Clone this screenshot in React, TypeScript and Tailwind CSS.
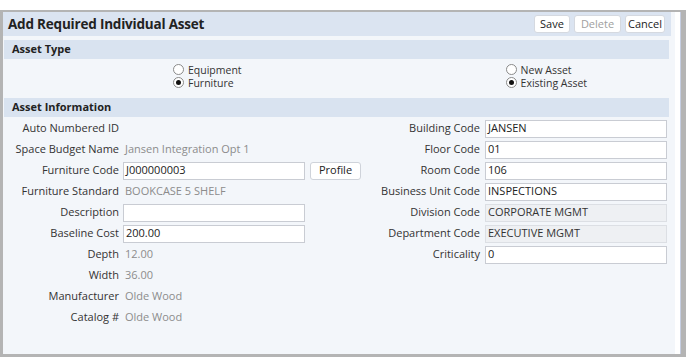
import React from "react";

const font = { fontFamily: '"Open Sans", "Noto Sans", Arial, sans-serif' };

function Radio({ checked, label }: { checked?: boolean; label: string }) {
  return (
    <div className="flex items-center h-[13px]">
      <span className="shrink-0 w-[11px] h-[11px] rounded-full border border-[#8a8a8a] bg-white flex items-center justify-center">
        {checked && <span className="w-[5px] h-[5px] rounded-full bg-[#111]" />}
      </span>
      <span className="ml-[4px] text-[10.5px] leading-[12px] text-[#333] whitespace-nowrap">{label}</span>
    </div>
  );
}

function Btn({ label, disabled, w }: { label: string; disabled?: boolean; w: string }) {
  return (
    <div
      className={
        w +
        " h-[18px] flex items-center justify-center bg-white border border-[#d5d9e0] rounded-[3px] text-[11px] " +
        (disabled ? "text-[#a0a0a0]" : "text-[#222]")
      }
    >
      {label}
    </div>
  );
}

type Kind = "text" | "input" | "ro" | "none";

function LeftRow({ label, value, kind, extra }: { label: string; value?: string; kind: Kind; extra?: React.ReactNode }) {
  return (
    <div className="h-[21px] flex items-center">
      <div className="shrink-0 w-[116px] text-right text-[11px] text-[#333] whitespace-nowrap">{label}</div>
      <div className="shrink-0 ml-[4px] flex items-center">
        {kind === "text" && <span className="pl-[2px] text-[11px] text-[#8c8c8c] whitespace-nowrap">{value}</span>}
        {kind === "input" && (
          <div className="shrink-0 w-[182px] h-[18px] bg-white border border-[#c9ccd3] pl-[2px] flex items-center text-[11px] text-[#222]">
            {value}
          </div>
        )}
        {extra}
      </div>
    </div>
  );
}

function RightRow({ label, value, kind }: { label: string; value?: string; kind: Kind }) {
  return (
    <div className="h-[21px] flex items-center">
      <div className="shrink-0 w-[137px] text-right text-[11px] text-[#333] whitespace-nowrap">{label}</div>
      <div className="shrink-0 ml-[5px]">
        {kind === "input" && (
          <div className="w-[182px] h-[18px] bg-white border border-[#c9ccd3] pl-[2px] flex items-center text-[11px] text-[#222]">
            {value}
          </div>
        )}
        {kind === "ro" && (
          <div className="w-[182px] h-[18px] bg-[#eef0f3] border border-[#dcdfe4] pl-[2px] flex items-center text-[11px] text-[#333]">
            {value}
          </div>
        )}
      </div>
    </div>
  );
}

export default function App() {
  return (
    <div className="w-[686px] h-[357px] bg-white pt-[10px]" style={font}>
      <div className="h-[347px] flex border-t-2 border-b-[3px] border-l-[3px] border-[#b4b4b4]">
        <div className="w-[672px] shrink-0 bg-[#f3f6fa] flex flex-col">
          {/* Title bar */}
          <div className="mr-[4px] h-[24px] bg-[#dbe4f1] flex items-center justify-between pl-[5px] pr-[6px]">
            <div className="text-[13.5px] font-bold text-[#222] tracking-[-0.2px]">Add Required Individual Asset</div>
            <div className="flex gap-[4px]">
              <Btn label="Save" w="w-[36px]" />
              <Btn label="Delete" disabled w="w-[47px]" />
              <Btn label="Cancel" w="w-[40px]" />
            </div>
          </div>

          {/* Asset Type */}
          <div className="mt-[4px] ml-[1px] mr-[6px] h-[19px] bg-[#d9e3f0] flex items-center pl-[8px] text-[11px] font-bold text-[#222]">
            Asset Type
          </div>
          <div className="h-[39px] pt-[4px] flex">
            <div className="ml-[170px] flex flex-col">
              <Radio label="Equipment" />
              <Radio label="Furniture" checked />
            </div>
            <div className="ml-[264px] flex flex-col">
              <Radio label="New Asset" />
              <Radio label="Existing Asset" checked />
            </div>
          </div>

          {/* Asset Information */}
          <div className="ml-[1px] mr-[6px] h-[19px] bg-[#d9e3f0] flex items-center pl-[8px] text-[11px] font-bold text-[#222]">
            Asset Information
          </div>
          <div className="flex pt-[1px]">
            <div className="w-[340px] shrink-0 flex flex-col">
              <LeftRow label="Auto Numbered ID" kind="none" />
              <LeftRow label="Space Budget Name" value="Jansen Integration Opt 1" kind="text" />
              <LeftRow
                label="Furniture Code"
                value="J000000003"
                kind="input"
                extra={
                  <div className="shrink-0 ml-[5px] w-[51px] h-[18px] bg-white border border-[#cfd3da] rounded-[3px] flex items-center justify-center text-[11px] text-[#222]">
                    Profile
                  </div>
                }
              />
              <LeftRow label="Furniture Standard" value="BOOKCASE 5 SHELF" kind="text" />
              <LeftRow label="Description" value="" kind="input" />
              <LeftRow label="Baseline Cost" value="200.00" kind="input" />
              <LeftRow label="Depth" value="12.00" kind="text" />
              <LeftRow label="Width" value="36.00" kind="text" />
              <LeftRow label="Manufacturer" value="Olde Wood" kind="text" />
              <LeftRow label="Catalog #" value="Olde Wood" kind="text" />
            </div>
            <div className="flex flex-col">
              <RightRow label="Building Code" value="JANSEN" kind="input" />
              <RightRow label="Floor Code" value="01" kind="input" />
              <RightRow label="Room Code" value="106" kind="input" />
              <RightRow label="Business Unit Code" value="INSPECTIONS" kind="input" />
              <RightRow label="Division Code" value="CORPORATE MGMT" kind="ro" />
              <RightRow label="Department Code" value="EXECUTIVE MGMT" kind="ro" />
              <RightRow label="Criticality" value="0" kind="input" />
            </div>
          </div>
        </div>
        <div className="w-[5px] shrink-0 bg-white" />
        <div className="w-px shrink-0 bg-[#c5cde0]" />
        <div className="flex-1 bg-[#b4b4b4]" />
      </div>
    </div>
  );
}
